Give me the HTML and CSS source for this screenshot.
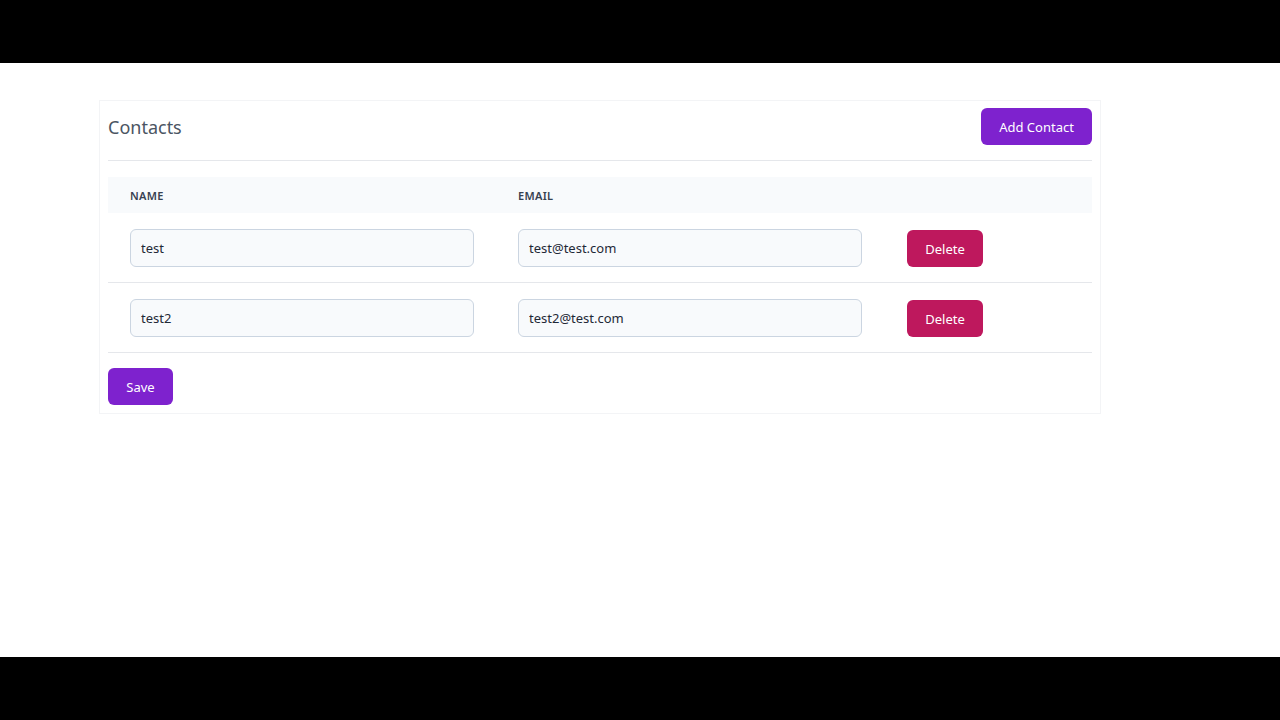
FILE: index.html
```html
<!DOCTYPE html>
<html>
<head>
<meta charset="utf-8">
<link rel="stylesheet" href="styles.css">
</head>
<body>
<div class="screen">
  <div class="card">
    <div class="card-header">
      <h1 class="title">Contacts</h1>
      <button class="btn btn-primary btn-add">Add Contact</button>
    </div>
    <table class="contacts">
      <colgroup><col class="c1"><col class="c2"><col class="c3"></colgroup>
      <thead>
        <tr><th>Name</th><th>Email</th><th></th></tr>
      </thead>
      <tbody>
        <tr>
          <td><input class="field" type="text" value="test"></td>
          <td><input class="field" type="text" value="test@test.com"></td>
          <td><button class="btn btn-danger">Delete</button></td>
        </tr>
        <tr>
          <td><input class="field" type="text" value="test2"></td>
          <td><input class="field" type="text" value="test2@test.com"></td>
          <td><button class="btn btn-danger">Delete</button></td>
        </tr>
      </tbody>
    </table>
    <button class="btn btn-primary btn-save">Save</button>
  </div>
</div>
</body>
</html>
```
FILE: styles.css
```css
html, body { margin: 0; padding: 0; }
body {
  background: #000;
  padding: 63px 0;
  font-family: "Noto Sans", "Lato", sans-serif;
}
.screen {
  height: 594px;
  background: #fff;
  padding-top: 37px;
  box-sizing: border-box;
}
.card {
  margin-left: 99px;
  width: 984px;
  padding: 7px 8px 8px;
  border: 1px solid #f3f4f6;
}
.card-header {
  display: flex;
  justify-content: space-between;
  align-items: center;
  padding-bottom: 15px;
  border-bottom: 1px solid #e5e7eb;
}
.title {
  margin: 0;
  font-size: 18px;
  font-weight: 400;
  color: #4b5563;
}
.btn {
  font-family: inherit;
  border: none;
  color: #fff;
  font-size: 13px;
  border-radius: 6px;
  height: 37px;
  cursor: pointer;
}
.btn-primary { background: #7e22ce; }
.btn-add { width: 111px; }
.btn-save { width: 65px; margin-top: 15px; display: block; }
.btn-danger { background: #be185d; width: 76px; margin: 1px 0 0 1px; display: block; }
.contacts {
  width: 984px;
  margin-top: 16px;
  border-collapse: collapse;
  table-layout: fixed;
}
.c1, .c2 { width: 388px; }
.c3 { width: 208px; }
.contacts thead tr { background: #f8fafc; }
.contacts th {
  height: 36px;
  padding: 0 22px;
  text-align: left;
  font-size: 11px;
  font-weight: 600;
  text-transform: uppercase;
  letter-spacing: 0.3px;
  color: #374151;
}
.contacts td {
  padding: 16px 22px 15px;
  border-bottom: 1px solid #e5e7eb;
  vertical-align: top;
  height: 38px;
}
.field {
  display: block;
  box-sizing: border-box;
  width: 100%;
  height: 38px;
  padding: 0 10px;
  border: 1px solid #cbd5e1;
  border-radius: 6px;
  background: #f8fafc;
  font-family: inherit;
  font-size: 13px;
  color: #1f2937;
}
```
